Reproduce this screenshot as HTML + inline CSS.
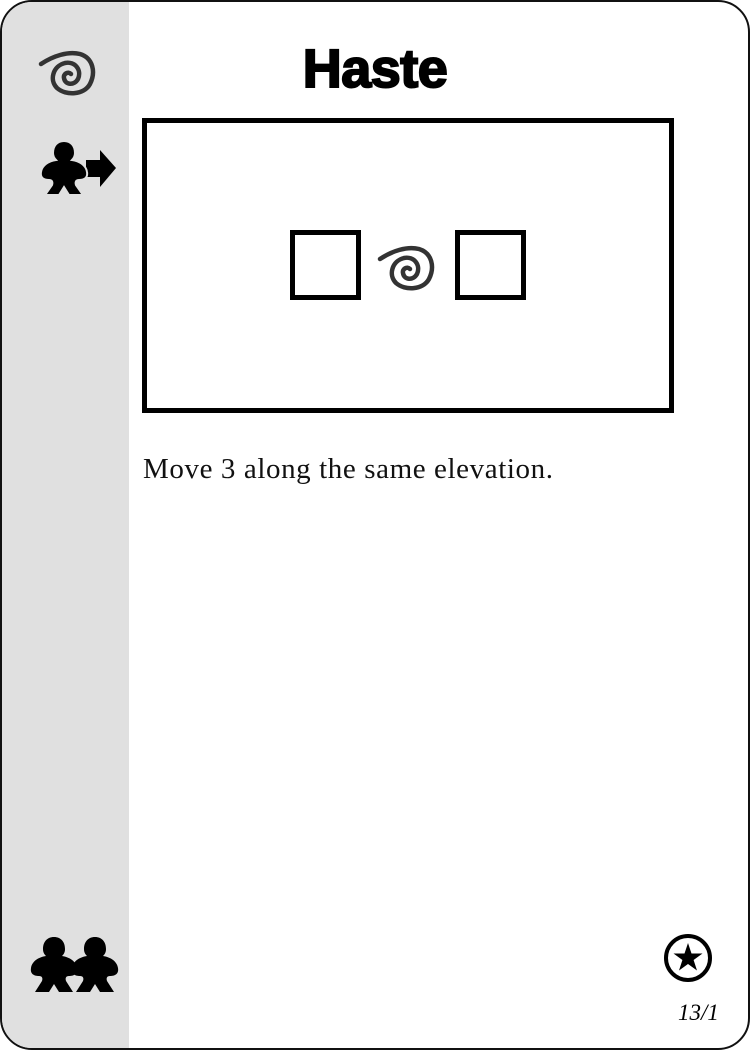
<!DOCTYPE html>
<html><head><meta charset="utf-8"><style>
html,body{margin:0;padding:0;background:#fff;}
.card{position:absolute;left:0;top:0;width:746px;height:1046px;border:2px solid #111;border-radius:32px;overflow:hidden;background:#fff;}
.side{position:absolute;left:0;top:0;width:127px;height:100%;background:#e0e0e0;}
.title{position:absolute;left:126px;width:494px;top:36px;text-align:center;font:bold 54px "Liberation Sans",sans-serif;-webkit-text-stroke:2px #000;letter-spacing:-0.5px;color:#000;}
.frame{position:absolute;left:140px;top:116px;width:522px;height:285px;border:5px solid #000;}
.sq{position:absolute;width:61px;height:60px;border:5px solid #000;top:228px;}
.body{position:absolute;left:141px;top:451px;font:29px "Liberation Serif",serif;letter-spacing:0.6px;color:#111;}
.num{position:absolute;left:676px;top:998px;font:italic 23px "Liberation Serif",serif;}
svg{position:absolute;}
</style></head><body>
<div class="card">
<div class="side"></div>
<div class="title">Haste</div>
<div class="frame"></div>
<div class="sq" style="left:288px"></div>
<div class="sq" style="left:453px"></div>
<div class="body">Move 3 along the same elevation.</div>
<div class="num">13/1</div>
<svg style="left:36px;top:46px" width="60" height="50" viewBox="0 0 60 50"><path d="M3 16 C15 8 30 3 42 6 C55 10 58 24 52 36 C46 47 28 48 19 40 C11 32 15 18 27 15 C37 13 44 22 40 31 C36 38 27 37 26 30 C25 26 30 23 33 26" fill="none" stroke="#333" stroke-width="4.5" stroke-linecap="round"/></svg>
<svg style="left:375px;top:241px" width="60" height="50" viewBox="0 0 60 50"><path d="M3 16 C15 8 30 3 42 6 C55 10 58 24 52 36 C46 47 28 48 19 40 C11 32 15 18 27 15 C37 13 44 22 40 31 C36 38 27 37 26 30 C25 26 30 23 33 26" fill="none" stroke="#333" stroke-width="4.5" stroke-linecap="round"/></svg>
<svg style="left:38px;top:138px" width="80" height="56" viewBox="0 0 80 56">
<path d="M46 20 L60 20 L60 10 L76 28 L60 47 L60 37 L46 37 Z" fill="#000"/>
<path d="M24 1 C31 1 35 6 35 13 C35 16 34 18 32 20 C39 21 46 25 47 32 C48 38 44 40 39 40 C36 40 35 42 36 45 L43 55 L29 55 L24 47 L19 55 L5 55 L12 45 C13 42 12 40 9 40 C4 40 0 38 1 32 C2 25 9 21 16 20 C14 18 13 16 13 13 C13 6 17 1 24 1 Z" fill="#000" stroke="#e0e0e0" stroke-width="2"/>
</svg>
<svg style="left:28px;top:934px" width="92" height="58" viewBox="0 0 92 58">
<path d="M24 1 C31 1 35 6 35 13 C35 16 34 18 32 20 C39 21 46 25 47 32 C48 38 44 40 39 40 C36 40 35 42 36 45 L43 56 L29 56 L24 48 L19 56 L5 56 L12 45 C13 42 12 40 9 40 C4 40 0 38 1 32 C2 25 9 21 16 20 C14 18 13 16 13 13 C13 6 17 1 24 1 Z" fill="#000"/>
<path transform="translate(41 0)" d="M24 1 C31 1 35 6 35 13 C35 16 34 18 32 20 C39 21 46 25 47 32 C48 38 44 40 39 40 C36 40 35 42 36 45 L43 56 L29 56 L24 48 L19 56 L5 56 L12 45 C13 42 12 40 9 40 C4 40 0 38 1 32 C2 25 9 21 16 20 C14 18 13 16 13 13 C13 6 17 1 24 1 Z" fill="#000"/>
</svg>
<svg style="left:660px;top:930px" width="52" height="52" viewBox="0 0 52 52">
<circle cx="26" cy="26" r="22" fill="none" stroke="#000" stroke-width="4"/>
<path d="M26 11 L29.5 21.5 L40.5 21.5 L31.6 28 L35 38.5 L26 32 L17 38.5 L20.4 28 L11.5 21.5 L22.5 21.5 Z" fill="#000"/>
</svg>
</div>
</body></html>
